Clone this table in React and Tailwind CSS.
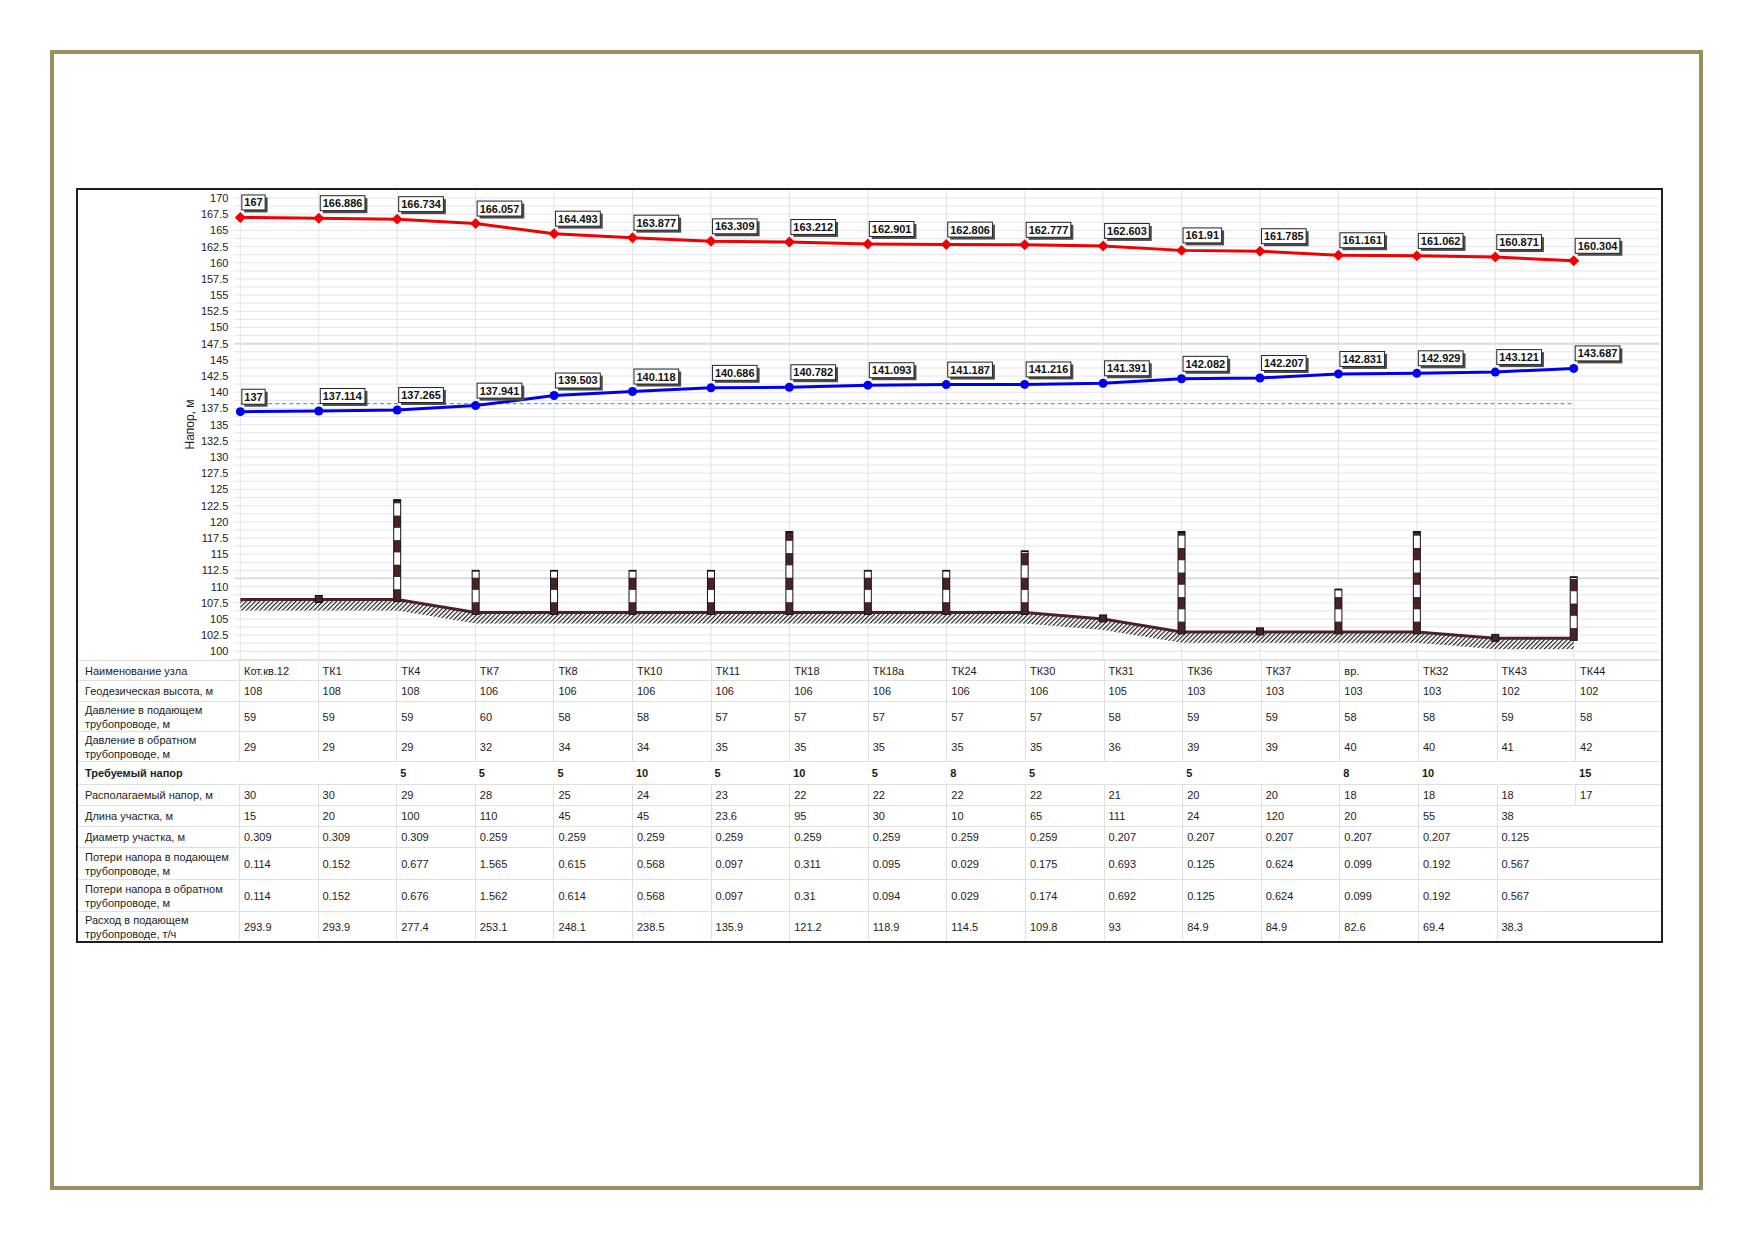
const NODES = ['Кот.кв.12', 'ТК1', 'ТК4', 'ТК7', 'ТК8', 'ТК10', 'ТК11', 'ТК18', 'ТК18а', 'ТК24', 'ТК30', 'ТК31', 'ТК36', 'ТК37', 'вр.', 'ТК32', 'ТК43', 'ТК44'];

const SUPPLY = [167, 166.886, 166.734, 166.057, 164.493, 163.877, 163.309, 163.212, 162.901, 162.806, 162.777, 162.603, 161.91, 161.785, 161.161, 161.062, 160.871, 160.304];
const RETURN = [137, 137.114, 137.265, 137.941, 139.503, 140.118, 140.686, 140.782, 141.093, 141.187, 141.216, 141.391, 142.082, 142.207, 142.831, 142.929, 143.121, 143.687];
const GEO = [108, 108, 108, 106, 106, 106, 106, 106, 106, 106, 106, 105, 103, 103, 103, 103, 102, 102];

// bar tops (m) for nodes with required head, small squares elsewhere
const BARS = { 2: 123.4, 3: 112.5, 4: 112.5, 5: 112.5, 6: 112.5, 7: 118.5, 8: 112.5, 9: 112.5, 10: 115.5, 12: 118.5, 14: 109.6, 15: 118.5, 17: 111.5 };
const SQUARES = [1, 11, 13, 16];

const ROWS = [
  { label: ['Наименование узла'], h: 'h-[20px]', values: NODES },
  { label: ['Геодезическая высота, м'], h: 'h-[21px]', values: GEO },
  { label: ['Давление в подающем', 'трубопроводе, м'], h: 'h-[30px]', values: [59, 59, 59, 60, 58, 58, 57, 57, 57, 57, 57, 58, 59, 59, 58, 58, 59, 58] },
  { label: ['Давление в обратном', 'трубопроводе, м'], h: 'h-[30px]', values: [29, 29, 29, 32, 34, 34, 35, 35, 35, 35, 35, 36, 39, 39, 40, 40, 41, 42] },
  { label: ['Требуемый напор'], h: 'h-[23px]', bold: true, noLines: true, values: ['', '', 5, 5, 5, 10, 5, 10, 5, 8, 5, '', 5, '', 8, 10, '', 15] },
  { label: ['Располагаемый напор, м'], h: 'h-[21px]', values: [30, 30, 29, 28, 25, 24, 23, 22, 22, 22, 22, 21, 20, 20, 18, 18, 18, 17] },
  { label: ['Длина участка, м'], h: 'h-[21px]', values: [15, 20, 100, 110, 45, 45, 23.6, 95, 30, 10, 65, 111, 24, 120, 20, 55, 38, ''] },
  { label: ['Диаметр участка, м'], h: 'h-[21px]', values: ['0.309', '0.309', '0.309', '0.259', '0.259', '0.259', '0.259', '0.259', '0.259', '0.259', '0.259', '0.207', '0.207', '0.207', '0.207', '0.207', '0.125', ''] },
  { label: ['Потери напора в подающем', 'трубопроводе, м'], h: 'h-[32px]', values: ['0.114', '0.152', '0.677', '1.565', '0.615', '0.568', '0.097', '0.311', '0.095', '0.029', '0.175', '0.693', '0.125', '0.624', '0.099', '0.192', '0.567', ''] },
  { label: ['Потери напора в обратном', 'трубопроводе, м'], h: 'h-[32px]', values: ['0.114', '0.152', '0.676', '1.562', '0.614', '0.568', '0.097', '0.31', '0.094', '0.029', '0.174', '0.692', '0.125', '0.624', '0.099', '0.192', '0.567', ''] },
  { label: ['Расход в подающем', 'трубопроводе, т/ч'], h: 'h-[29px]', last: true, values: ['293.9', '293.9', '277.4', '253.1', '248.1', '238.5', '135.9', '121.2', '118.9', '114.5', '109.8', '93', '84.9', '84.9', '82.6', '69.4', '38.3', ''] },
];

const nx = (i) => 239 + i * 78.6;
const vy = (v) => 198 + (170 - v) * 6.49;
const textW = (s) => [...String(s)].reduce((w, c) => w + (c === '.' ? 3.06 : 6.12), 0);

const FONT = '"Liberation Sans", Arial, sans-serif';

const ValueLabel = ({ x, y, text }) => {
  const w = textW(text) + 5;
  const top = y - 23;
  return (
    <g>
      <rect x={x + 3} y={top + 3} width={w} height={15} fill="#4d4d4d" />
      <rect x={x + 0.5} y={top + 0.5} width={w} height={15} fill="#fff" stroke="#222" strokeWidth="1" />
      <text x={x + 3} y={top + 12} fontSize="11" fontWeight="bold" fill="#111" fontFamily={FONT}>{text}</text>
    </g>
  );
};

const Bar = ({ i, top }) => {
  const x = nx(i) - 3.5;
  const bottom = vy(GEO[i]) + 2;
  const yTop = vy(top);
  const seg = 12.3;
  const segs = [];
  for (let k = 0; bottom - k * seg > yTop; k += 2) {
    const y2 = bottom - k * seg;
    const y1 = Math.max(yTop, y2 - seg);
    segs.push(<rect key={k} x={x} y={y1} width={7} height={y2 - y1} fill="#4a2222" />);
  }
  return (
    <g>
      <rect x={x} y={yTop} width={7} height={bottom - yTop} fill="#fff" />
      {segs}
      <rect x={x} y={yTop} width={7} height={bottom - yTop} fill="none" stroke="#111" strokeWidth="1" />
      <line x1={x} x2={x + 7} y1={yTop + 0.5} y2={yTop + 0.5} stroke="#111" strokeWidth="1.5" />
    </g>
  );
};

const Chart = () => {
  const ticks = [];
  for (let v = 170; v >= 100; v -= 2.5) ticks.push(v);
  const minor = [];
  for (let v = 170; v >= 98.75; v -= 1.25) minor.push(v);

  const ground = GEO.map((g, i) => `${nx(i)},${vy(g)}`);
  const groundBottom = GEO.map((g, i) => `${nx(i)},${vy(g) + 11}`).reverse();

  return (
    <svg width="1583" height="471" viewBox="78 190 1583 471" className="block">
      <defs>
        <pattern id="hatch" width="3.2" height="3.2" patternUnits="userSpaceOnUse" patternTransform="rotate(45)">
          <line x1="0.6" y1="0" x2="0.6" y2="3.2" stroke="#141414" strokeWidth="1.1" />
        </pattern>
      </defs>

      {minor.map((v) => (
        <line key={v} x1={233} x2={1661} y1={vy(v)} y2={vy(v)} stroke="#e4e4ec" strokeWidth="1" />
      ))}
      <line x1={233} x2={1661} y1={vy(147.5)} y2={vy(147.5)} stroke="#dadae0" strokeWidth="2" />
      <line x1={233} x2={1661} y1={579} y2={579} stroke="#dadae0" strokeWidth="2" />
      {NODES.map((n, i) => (
        <line key={n} x1={nx(i)} x2={nx(i)} y1={190} y2={661} stroke="#e2e2ea" strokeWidth="1" />
      ))}

      {ticks.map((v) => (
        <text key={v} x={227} y={vy(v) + 4} textAnchor="end" fontSize="11" fill="#222" fontFamily={FONT}>{v}</text>
      ))}
      <text x={193} y={425} fontSize="12" fill="#222" fontFamily={FONT} textAnchor="middle" transform="rotate(-90 193 425)">Напор, м</text>

      <polygon points={[...ground, ...groundBottom].join(' ')} fill="url(#hatch)" />
      <polyline points={ground.join(' ')} fill="none" stroke="#4a2424" strokeWidth="3" />

      {SQUARES.map((i) => (
        <rect key={i} x={nx(i) - 3.5} y={vy(GEO[i]) - 4} width={7} height={7} fill="#4a2222" stroke="#111" strokeWidth="1" />
      ))}
      {Object.entries(BARS).map(([i, top]) => <Bar key={i} i={Number(i)} top={top} />)}

      <line x1={239} x2={nx(17)} y1={404} y2={404} stroke="#4ba8c6" strokeWidth="1.2" strokeDasharray="4 3" />

      <polyline points={SUPPLY.map((v, i) => `${nx(i)},${vy(v)}`).join(' ')} fill="none" stroke="#f00000" strokeWidth="3" />
      {SUPPLY.map((v, i) => (
        <polygon key={i} points={`${nx(i)},${vy(v) - 5.5} ${nx(i) + 5.5},${vy(v)} ${nx(i)},${vy(v) + 5.5} ${nx(i) - 5.5},${vy(v)}`} fill="#f00000" />
      ))}

      <polyline points={RETURN.map((v, i) => `${nx(i)},${vy(v)}`).join(' ')} fill="none" stroke="#0000f0" strokeWidth="3" />
      {RETURN.map((v, i) => (
        <circle key={i} cx={nx(i)} cy={vy(v)} r="4.5" fill="#0000f0" />
      ))}

      {SUPPLY.map((v, i) => <ValueLabel key={`s${i}`} x={nx(i) + 1} y={vy(v)} text={v} />)}
      {RETURN.map((v, i) => <ValueLabel key={`r${i}`} x={nx(i) + 1} y={vy(v)} text={v} />)}
    </svg>
  );
};

const DataTable = () => (
  <div className="border-t border-[#e0e0e0] text-[11px] leading-[14px] text-[#1c1c1c]">
    {ROWS.map((row, r) => (
      <div
        key={r}
        className={`grid grid-cols-[161px_repeat(17,78.6px)_1fr] ${row.h} ${row.last ? '' : 'border-b border-[#e0e0e0]'} ${row.bold ? 'font-bold' : ''}`}
      >
        <div className="flex flex-col justify-center pl-[7px]">
          {row.label.map((l) => (
            <span key={l}>{l}</span>
          ))}
        </div>
        {row.values.map((v, i) => (
          <div
            key={i}
            className={`flex items-center pl-[4px] ${row.noLines || (i === 17 && v === '') ? '' : 'border-l border-[#e0e0e0]'}`}
          >
            {v}
          </div>
        ))}
      </div>
    ))}
  </div>
);

export default function App() {
  return (
    <div className="w-[1752px] h-[1239px] bg-white pt-[50px] pl-[50px]" style={{ fontFamily: FONT }}>
      <div className="w-[1653px] h-[1140px] border-4 border-[#9b8f5f] pt-[134px] pl-[22px]">
        <div className="w-[1587px] h-[755px] border-2 border-[#1e1e1e] bg-white flex flex-col">
          <Chart />
          <DataTable />
        </div>
      </div>
    </div>
  );
}
